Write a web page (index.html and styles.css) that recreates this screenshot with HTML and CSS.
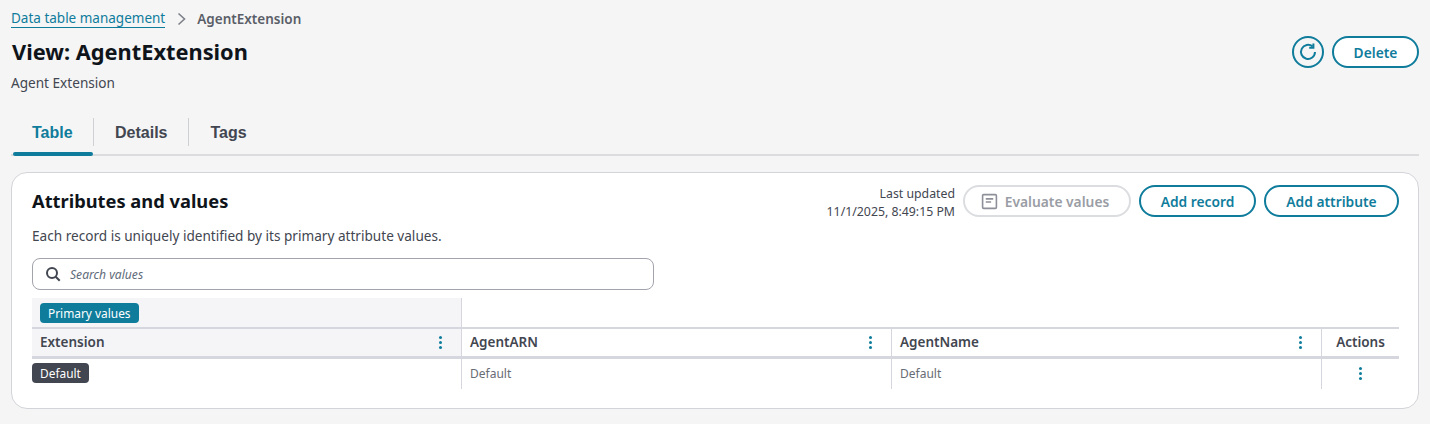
FILE: index.html
```html
<!DOCTYPE html>
<html lang="en">
<head>
  <meta charset="UTF-8" />
  <title>View: AgentExtension</title>
  <link rel="stylesheet" href="styles.css">
</head>
<body>
  <nav class="breadcrumb">
    <a href="#">Data table management</a>
    <svg class="crumb-arrow" width="12" height="14" viewBox="0 0 12 14"><path d="M2.5 1.5 8.5 7l-6 5.5" /></svg>
    <span>AgentExtension</span>
  </nav>

  <header class="page-head">
    <div>
      <h1>View: AgentExtension</h1>
      <p class="subtitle">Agent Extension</p>
    </div>
    <div class="head-actions">
      <button class="btn btn-icon" title="Refresh">
        <svg width="20" height="20" viewBox="0 0 20 20"><path d="M14.6 4.6A7 7 0 1 0 17 10" /><path d="M15.4 1.6v4.2h-4.2" /></svg>
      </button>
      <button class="btn btn-delete">Delete</button>
    </div>
  </header>

  <div class="tabs">
    <a class="tab active" href="#">Table</a>
    <a class="tab" href="#">Details</a>
    <a class="tab" href="#">Tags</a>
  </div>

  <section class="card">
    <div class="card-head">
      <h2>Attributes and values</h2>
      <div class="card-actions">
        <div class="updated">Last updated<br>11/1/2025, 8:49:15 PM</div>
        <button class="btn btn-disabled">
          <svg width="17" height="17" viewBox="0 0 16 16"><path d="M1.5 2.5a1 1 0 0 1 1-1h11a1 1 0 0 1 1 1v11a1 1 0 0 1-1 1h-11a1 1 0 0 1-1-1z" /><path d="M4.5 5.5h7M4.5 8.5h5" /></svg>
          Evaluate values
        </button>
        <button class="btn btn-record">Add record</button>
        <button class="btn btn-attr">Add attribute</button>
      </div>
    </div>
    <p class="card-desc">Each record is uniquely identified by its primary attribute values.</p>

    <div class="search">
      <svg width="16" height="16" viewBox="0 0 16 16"><circle cx="7" cy="7" r="5" /><path d="m10.7 10.7 4 4" /></svg>
      <span>Search values</span>
    </div>

    <div class="grid">
      <div class="group primary-group"><span class="badge badge-blue">Primary values</span></div>
      <div class="group rest-group"></div>

      <div class="th first">Extension <i class="dots"></i></div>
      <div class="th">AgentARN <i class="dots"></i></div>
      <div class="th">AgentName <i class="dots"></i></div>
      <div class="th actions">Actions</div>

      <div class="td first"><span class="badge badge-dark">Default</span></div>
      <div class="td">Default</div>
      <div class="td">Default</div>
      <div class="td actions"><i class="dots"></i></div>
    </div>
  </section>
</body>
</html>
```

FILE: styles.css
```css
:root {
  --azul: #0f7c9c;
  --texto: #424650;
  --linha: #d5d6de;
}

* {
  margin: 0;
  padding: 0;
  box-sizing: border-box;
}

body {
  font-family: 'Noto Sans', sans-serif;
  background-color: #f5f5f5;
  color: var(--texto);
  padding: 9px 11px 0 11px;
  height: 424px;
  overflow: hidden;
}

.breadcrumb {
  display: flex;
  align-items: center;
  font-size: 13.5px;
  height: 19px;
}

.breadcrumb a {
  color: var(--azul);
  text-decoration: none;
  border-bottom: 1px solid var(--azul);
  line-height: 17px;
}

.breadcrumb span {
  font-weight: 600;
  color: #5a5e68;
}

.crumb-arrow {
  margin: 0 9px 0 11px;
}

.crumb-arrow path {
  fill: none;
  stroke: #7d8089;
  stroke-width: 1.6;
}

.page-head {
  display: flex;
  justify-content: space-between;
  align-items: flex-start;
  margin-top: 8px;
}

h1 {
  font-size: 21.8px;
  line-height: 32px;
  font-weight: 700;
  color: #0f141a;
  padding-left: 1px;
}

.subtitle {
  font-size: 13.6px;
  line-height: 18px;
  margin-top: 6px;
}

.btn {
  font-family: inherit;
  font-weight: 600;
  font-size: 13.8px;
  height: 32px;
  border-radius: 16px;
  border: 2px solid var(--azul);
  background-color: white;
  color: var(--azul);
  display: inline-flex;
  align-items: center;
  justify-content: center;
}

.head-actions {
  display: flex;
  gap: 8px;
}

.btn-icon {
  width: 32px;
  background: none;
}

.btn-icon path {
  fill: none;
  stroke: var(--azul);
  stroke-width: 2;
}

.btn-delete {
  width: 87px;
}

.tabs {
  display: flex;
  height: 38px;
  margin-top: 26px;
  border-bottom: 2px solid #dcdcdf;
  align-items: flex-start;
  position: relative;
}

.tab {
  font-family: 'Liberation Sans', sans-serif;
  font-weight: 700;
  font-size: 16px;
  line-height: 20px;
  text-decoration: none;
  color: var(--texto);
  padding: 5px 21px 0 21px;
  height: 28px;
  border-right: 1px solid #cfd0d4;
}

.tab:last-child {
  border-right: none;
}

.tab.active {
  color: var(--azul);
  margin-left: 2px;
  width: 81px;
  padding-left: 19px;
}

/* sublinhado da aba ativa */
.tab.active::after {
  content: '';
  position: absolute;
  left: 2px;
  bottom: -2px;
  width: 80px;
  height: 4px;
  border-radius: 2px;
  background-color: var(--azul);
}

.card {
  background-color: white;
  border: 1px solid #d3d4d9;
  border-radius: 16px;
  margin-top: 16px;
  width: 1408px;
  height: 237px;
  padding: 10px 19px 0 20px;
}

.card-head {
  display: flex;
  justify-content: space-between;
  align-items: center;
}

h2 {
  font-size: 18.3px;
  font-weight: 700;
  color: #0f141a;
  margin-bottom: 2px;
}

.card-actions {
  display: flex;
  align-items: center;
  gap: 8px;
}

.updated {
  font-size: 12.3px;
  line-height: 18px;
  text-align: right;
  margin: 2px 0 -2px 0;
}

.btn-disabled {
  width: 168px;
  gap: 7px;
  padding-right: 4px;
  border-color: #dcdde0;
  color: #9a9da5;
}

.btn-disabled path {
  fill: none;
  stroke: #8d9098;
  stroke-width: 1.5;
}

.btn-record {
  width: 117px;
}

.btn-attr {
  width: 135px;
}

.card-desc {
  font-size: 13.6px;
  line-height: 18px;
  margin-top: 8px;
}

.search {
  display: flex;
  align-items: center;
  gap: 9px;
  width: 622px;
  height: 32px;
  margin-top: 13px;
  padding-left: 12px;
  border: 1.5px solid #a2a3ab;
  border-radius: 8px;
  font-size: 12.1px;
  font-style: italic;
  color: #5f6b7a;
}

.search svg {
  fill: none;
  stroke: #424650;
  stroke-width: 2;
}

.grid {
  display: grid;
  grid-template-columns: 430px 430px 430px 77px;
  margin-top: 8px;
  font-size: 13.5px;
}

.group {
  height: 29px;
  display: flex;
  align-items: center;
}

.primary-group {
  background-color: #f5f5f8;
  padding-left: 8px;
  border-right: 1px solid var(--linha);
}

.rest-group {
  grid-column: 2 / 5;
}

.badge {
  display: inline-block;
  font-size: 11.9px;
  line-height: 20px;
  padding: 0 8px;
  border-radius: 4px;
  color: white;
}

.badge-blue {
  background-color: var(--azul);
}

.badge-dark {
  background-color: #424650;
}

.th {
  display: flex;
  justify-content: space-between;
  align-items: center;
  height: 32px;
  padding: 0 19px 1px 8px;
  font-weight: 600;
  border-top: 2px solid var(--linha);
  border-bottom: 3px solid var(--linha);
  border-right: 1px solid var(--linha);
}

.th.first {
  background-color: #f5f5f8;
}

.th.actions {
  border-right: none;
  padding: 0 0 1px 0;
  justify-content: center;
}

.td {
  display: flex;
  align-items: center;
  height: 30px;
  padding: 0 0 2px 8px;
  font-size: 12px;
  color: #686c75;
  border-right: 1px solid var(--linha);
}

.td.first {
  padding-left: 0;
}

.td.actions {
  border-right: none;
  padding: 0 0 2px 0;
  justify-content: center;
}

/* tres pontinhos */
.dots {
  display: block;
  width: 3px;
  height: 3px;
  border-radius: 50%;
  background-color: var(--azul);
  box-shadow: 0 -5px 0 var(--azul), 0 5px 0 var(--azul);
}
```
